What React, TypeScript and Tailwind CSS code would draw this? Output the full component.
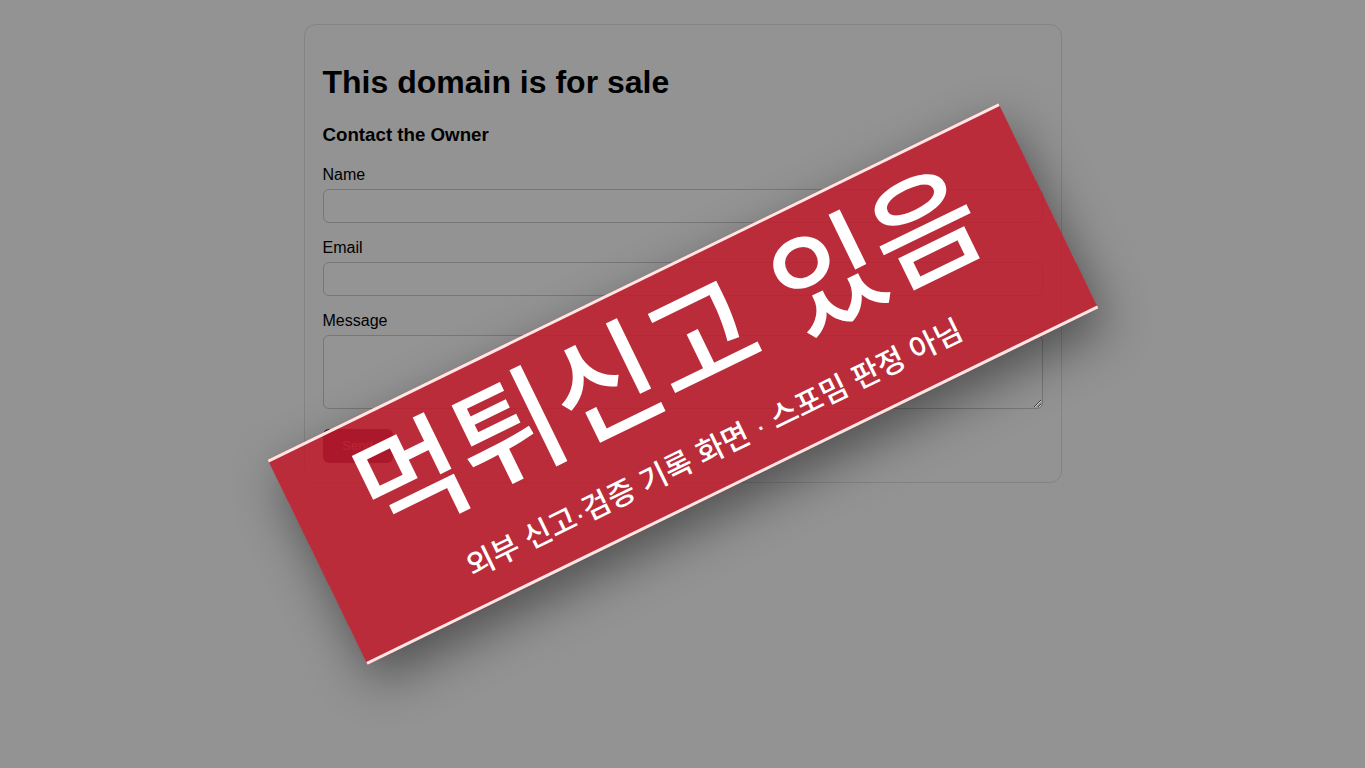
export default function App() {
  return (
    <div className="relative min-h-screen w-full overflow-hidden bg-[#939393] font-['Liberation_Sans',Arial,sans-serif] text-black">
      <div className="flex justify-center pt-6">
        <div className="w-[758px] rounded-xl border border-[#838383] px-[18px] pt-[39px] pb-[19px]">
          <h1 className="text-[32px] font-bold leading-[37px]">This domain is for sale</h1>
          <h3 className="mt-[23px] text-[18.72px] font-bold leading-[22px]">Contact the Owner</h3>
          <form className="flex flex-col">
            <label className="mt-[19px] text-base leading-5">Name</label>
            <input
              type="text"
              className="mt-1 h-[34px] w-full rounded-md border border-[#777777] bg-[#949494] outline-none"
            />
            <label className="mt-[15px] text-base leading-5">Email</label>
            <input
              type="email"
              className="mt-1 h-[34px] w-full rounded-md border border-[#777777] bg-[#949494] outline-none"
            />
            <label className="mt-[15px] text-base leading-5">Message</label>
            <textarea className="mt-1 h-[74px] w-full rounded-md border border-[#777777] bg-[#949494] outline-none" />
            <div className="mt-5">
              <button
                type="button"
                className="h-[34px] w-[70px] rounded-md bg-[#3a1030] text-[13px] text-[#b06070]"
              >
                Send
              </button>
            </div>
          </form>
        </div>
      </div>

      {/* report stamp */}
      <div className="absolute top-1/2 left-1/2 flex h-[228px] w-[813px] -translate-x-1/2 -translate-y-1/2 rotate-[-26deg] flex-col items-center justify-center border-y-[3px] border-[#fde6e4] bg-[rgba(193,26,42,0.85)] font-['Liberation_Sans','Noto_Sans_CJK_KR',sans-serif] text-white shadow-[0_20px_50px_rgba(0,0,0,0.45)]">
        <div className="mt-[-4px] text-[117px] font-medium leading-none">먹튀신고 있음</div>
        <div className="mt-[30px] text-[30px] font-medium leading-none">
          외부 신고·검증 기록 화면 · 스포밈 판정 아님
        </div>
      </div>
    </div>
  );
}
